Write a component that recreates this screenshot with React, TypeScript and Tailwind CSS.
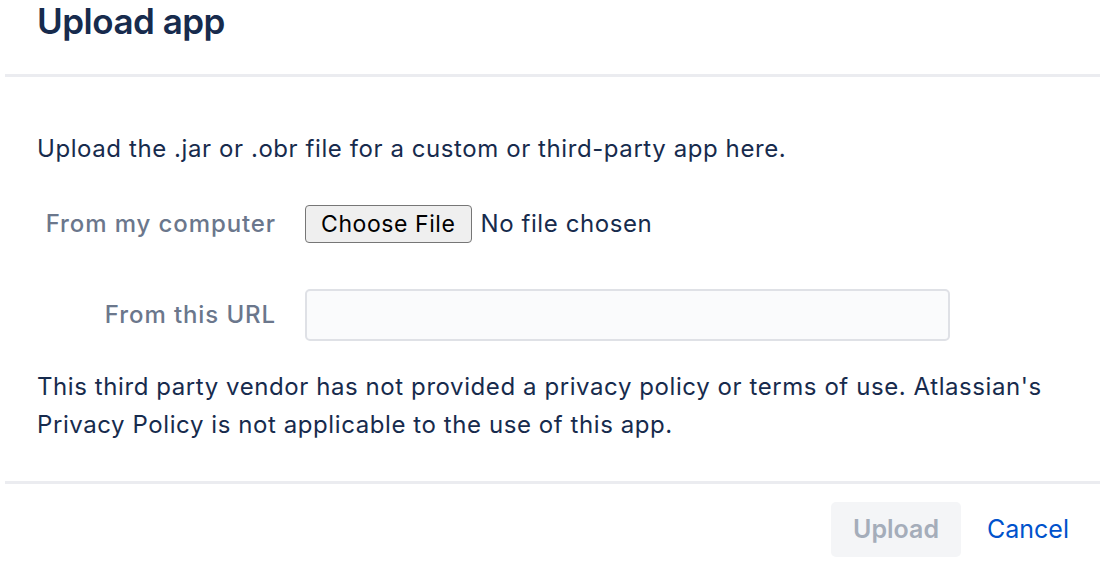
export default function App() {
  const font = { fontFamily: "Inter, 'Liberation Sans', Arial, sans-serif" };
  return (
    <div className="w-[1108px] h-[563px] bg-white overflow-hidden text-[#172b4d]" style={font}>
      <div className="mx-[5px]">
        {/* Header */}
        <div className="h-[74px] px-8 flex items-start">
          <h1 className="text-[35px] font-semibold leading-[42px] tracking-[-0.5px]">Upload app</h1>
        </div>
        <div className="h-[3px] bg-[#ebecf0] w-[1095px]" />

        {/* Body */}
        <div className="px-8 pt-[72px] text-[24px] tracking-[0.58px]">
          <p className="leading-[38px] -mt-[19px]">
            Upload the .jar or .obr file for a custom or third-party app here.
          </p>

          <div className="mt-[37px] flex items-center h-[38px]">
            <label className="w-[239px] text-right font-medium text-[#6b778c] tracking-[0.9px]">From my computer</label>
            <div className="ml-[29px] flex items-center">
              <button className="h-[38px] px-[15px] border border-[#767676] rounded-[4px] bg-[#efefef] text-[23px] text-black">
                Choose File
              </button>
              <span className="ml-[9px]">No file chosen</span>
            </div>
          </div>

          <div className="mt-[46px] flex items-center h-[52px]">
            <label className="w-[239px] text-right font-medium text-[#6b778c] tracking-[0.9px]">From this URL</label>
            <input
              type="text"
              className="ml-[29px] w-[645px] h-[52px] rounded-[5px] border-2 border-[#dfe1e6] bg-[#fafbfc] outline-none"
            />
          </div>

          <p className="mt-[27px] leading-[38px]">
            This third party vendor has not provided a privacy policy or terms of use. Atlassian's
            <br />
            Privacy Policy is not applicable to the use of this app.
          </p>
        </div>

        <div className="mt-[37px] h-[3px] bg-[#ebecf0] w-[1095px]" />

        {/* Footer */}
        <div className="flex justify-end items-center pr-[34px] pt-[18px]">
          <button className="w-[130px] h-[55px] rounded-[5px] bg-[#f4f5f7] text-[#a5adba] text-[25px] font-semibold">
            Upload
          </button>
          <button className="ml-[26px] text-[25px] text-[#0052cc]">Cancel</button>
        </div>
      </div>
    </div>
  );
}
